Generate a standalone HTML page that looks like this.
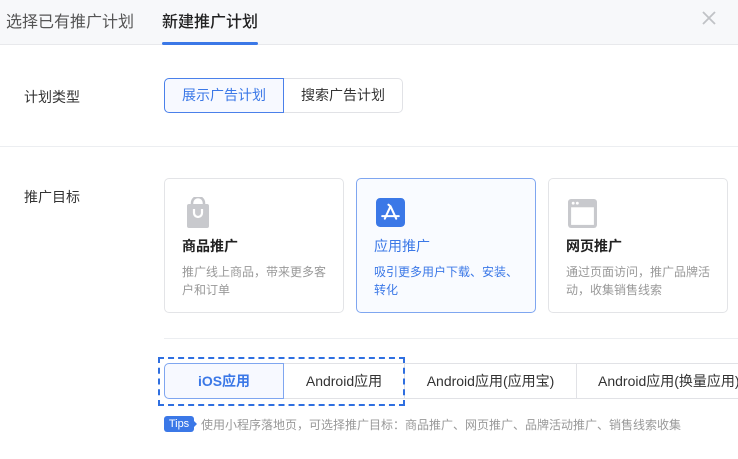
<!DOCTYPE html><html><head><meta charset="utf-8"><style>
*{box-sizing:border-box;margin:0;padding:0}
body{width:738px;height:459px;overflow:hidden;background:#fff;font-family:"Liberation Sans","Noto Sans CJK SC",sans-serif;position:relative;color:#333}
.a{position:absolute}
.hd{left:0;top:0;width:738px;height:45px;background:#f7f8fa;border-bottom:1px solid #e8e9ec}
.t{font-size:16px;top:8px}
.card{border:1px solid #e3e4e7;border-radius:5px;width:180px;height:135px;top:178px;background:#fff}
.card .ic{position:absolute;left:19px;top:18px;width:28px;height:31px}
.card h4{position:absolute;left:17px;top:57px;font-size:14px;font-weight:bold;color:#222}
.card p{position:absolute;left:17px;top:84px;width:150px;font-size:12px;line-height:18px;color:#999}
.seg{top:363px;height:36px;border:1px solid #e1e2e6;font-size:14px;line-height:34px;text-align:center;color:#333}
</style></head><body>
<div class="a hd"></div>
<div class="a t" style="left:6px;color:#555">选择已有推广计划</div>
<div class="a t" style="left:162px;color:#222;font-weight:500">新建推广计划</div>
<div class="a" style="left:162px;top:42px;width:96px;height:3px;background:#3b78e7;border-radius:2px"></div>
<svg class="a" style="left:702px;top:11px" width="14" height="14" viewBox="0 0 14 14"><path d="M1 1L13 13M13 1L1 13" stroke="#c0c2c6" stroke-width="1.8"/></svg>

<div class="a" style="left:24px;top:87px;font-size:14px">计划类型</div>
<div class="a" style="left:164px;top:78px;width:120px;height:35px;border:1px solid #4a80ea;border-radius:5px 0 0 5px;background:#f7f9ff;color:#3b78e7;font-size:14px;line-height:33px;text-align:center">展示广告计划</div>
<div class="a" style="left:284px;top:78px;width:119px;height:35px;border:1px solid #e1e2e6;border-left:none;border-radius:0 5px 5px 0;font-size:14px;line-height:33px;text-align:center">搜索广告计划</div>
<div class="a" style="left:0;top:146px;width:738px;height:1px;background:#eceef1"></div>

<div class="a" style="left:24px;top:187px;font-size:14px">推广目标</div>
<div class="a card" style="left:164px"><svg class="ic" viewBox="0 0 28 31"><path d="M8 8V6a6 6 0 0 1 12 0v2" fill="none" stroke="#c4c5c9" stroke-width="2.5"/><rect x="3" y="7" width="22" height="24" rx="2" fill="#c8c9cd"/><path d="M10 12v4a4 4 0 0 0 8 0v-4" fill="none" stroke="#fff" stroke-width="2.2"/></svg><h4>商品推广</h4><p>推广线上商品，带来更多客户和订单</p></div>
<div class="a card" style="left:356px;border-color:#7fa6f0;background:#f9fbff"><svg class="ic" viewBox="0 0 28 28" style="top:19px;width:29px;height:29px"><rect width="28" height="28" rx="4" fill="#3b78e7"/><path d="M14 8L8.5 20M14 8l5.5 12M12 6.5l2 1.5M6 17.5h16" stroke="#fff" stroke-width="2" stroke-linecap="round" fill="none"/></svg><h4 style="color:#3b78e7;font-weight:normal">应用推广</h4><p style="color:#3b78e7">吸引更多用户下载、安装、转化</p></div>
<div class="a card" style="left:548px"><svg class="ic" viewBox="0 0 28 28" style="top:20px;width:29px;height:29px"><rect x="0" y="0" width="28" height="28" rx="3" fill="#c8c9cd"/><rect x="3" y="8" width="22" height="17" fill="#fff"/><circle cx="5" cy="4" r="1.4" fill="#fff"/><circle cx="9" cy="4" r="1.4" fill="#fff"/></svg><h4>网页推广</h4><p>通过页面访问，推广品牌活动，收集销售线索</p></div>
<div class="a" style="left:164px;top:338px;width:574px;height:1px;background:#eceef1"></div>

<div class="a seg" style="left:164px;width:120px;border-color:#7fa6f0;border-radius:5px 0 0 5px;background:#f7f9ff;color:#3b78e7;font-weight:bold">iOS应用</div>
<div class="a seg" style="left:284px;width:121px;border-left:none">Android应用</div>
<div class="a seg" style="left:405px;width:172px;border-left:none">Android应用(应用宝)</div>
<div class="a seg" style="left:577px;width:180px;border-left:none;text-align:left;padding-left:21px;white-space:nowrap">Android应用(换量应用)</div>
<div class="a" style="left:158px;top:357px;width:247px;height:49px;border:2px dashed #2f6fe0"></div>

<div class="a" style="left:164px;top:416px;width:30px;height:16px;background:#3b78e7;border-radius:3px;color:#fff;font-size:11px;line-height:16px;text-align:center">Tips</div>
<div class="a" style="left:193px;top:420px;width:0;height:0;border-left:4px solid #3b78e7;border-top:4px solid transparent;border-bottom:4px solid transparent"></div>
<div class="a" style="left:201px;top:416px;font-size:12px;color:#999;white-space:nowrap">使用小程序落地页，可选择推广目标：商品推广、网页推广、品牌活动推广、销售线索收集</div>
</body></html>
